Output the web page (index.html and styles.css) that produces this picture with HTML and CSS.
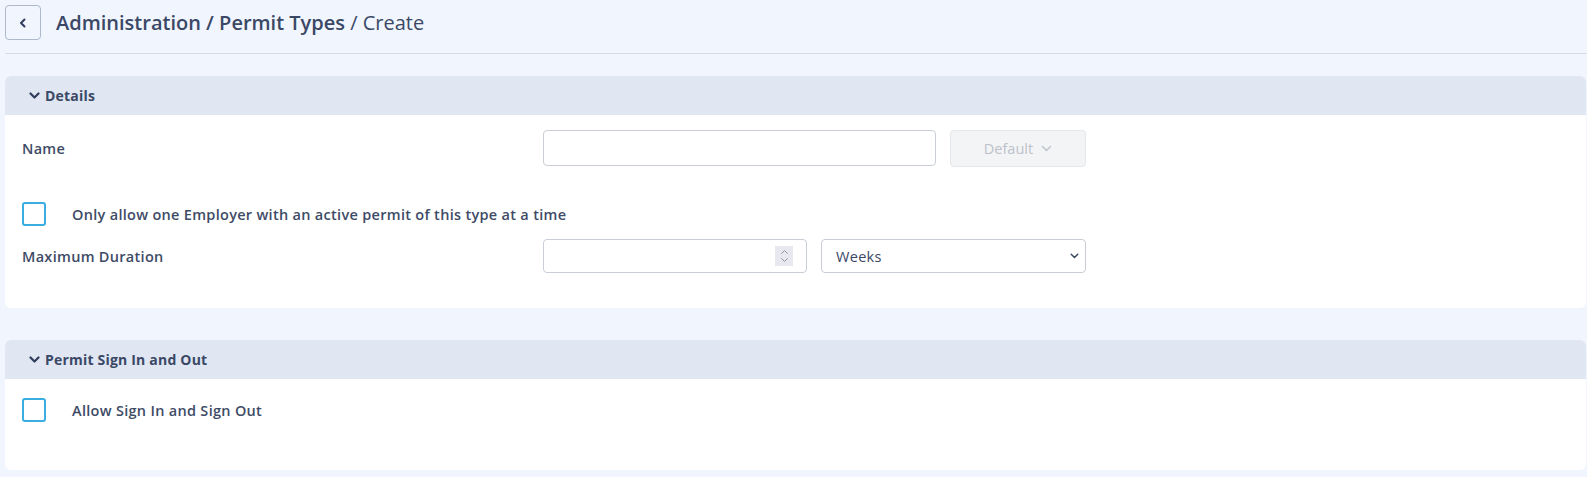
FILE: index.html
```html
<!DOCTYPE html>
<html lang="en">
<head>
    <meta charset="UTF-8">
    <meta name="viewport" content="width=device-width, initial-scale=1.0">
    <title>Create Permit Type</title>
    <link rel="stylesheet" href="styles.css">
</head>
<body>
    <div class="topbar">
        <button type="button" class="back-btn">
            <svg width="12" height="12" viewBox="0 0 12 12"><path d="M7.5 2.5 L4 6 L7.5 9.5" fill="none" stroke="#2f3d5c" stroke-width="2" stroke-linecap="round" stroke-linejoin="round"/></svg>
        </button>
        <h1 class="page-title">Administration / Permit Types <span class="current">/ Create</span></h1>
    </div>
    <div class="divider"></div>

    <section class="panel">
        <div class="panel-header">
            <svg class="caret" width="11" height="8" viewBox="0 0 11 8"><path d="M1.5 1.5 L5.5 5.5 L9.5 1.5" fill="none" stroke="#2f3d5c" stroke-width="2.2" stroke-linecap="round" stroke-linejoin="round"/></svg>
            Details
        </div>
        <div class="panel-body details-body">
            <div class="form-row">
                <label class="field-label">Name</label>
                <div class="controls">
                    <input type="text" class="text-input name-input">
                    <button type="button" class="default-btn" disabled>
                        Default
                        <svg width="11" height="7" viewBox="0 0 11 7"><path d="M1.5 1.5 L5.5 5.5 L9.5 1.5" fill="none" stroke="#bfc4cd" stroke-width="1.5" stroke-linecap="round" stroke-linejoin="round"/></svg>
                    </button>
                </div>
            </div>

            <div class="check-row">
                <span class="checkbox"></span>
                <span class="check-label">Only allow one Employer with an active permit of this type at a time</span>
            </div>

            <div class="form-row duration-row">
                <label class="field-label">Maximum Duration</label>
                <div class="controls">
                    <div class="number-input">
                        <span class="spinner">
                            <svg width="9" height="16" viewBox="0 0 9 16"><path d="M1.5 5.5 L4.5 2.5 L7.5 5.5 M1.5 10.5 L4.5 13.5 L7.5 10.5" fill="none" stroke="#8e96a4" stroke-width="1" stroke-linecap="round"/></svg>
                        </span>
                    </div>
                    <div class="select-box">
                        <span>Weeks</span>
                        <svg width="9" height="6" viewBox="0 0 9 6"><path d="M1.2 1.2 L4.5 4.5 L7.8 1.2" fill="none" stroke="#3e4b66" stroke-width="1.5" stroke-linecap="round"/></svg>
                    </div>
                </div>
            </div>
        </div>
    </section>

    <section class="panel last-panel">
        <div class="panel-header">
            <svg class="caret" width="11" height="8" viewBox="0 0 11 8"><path d="M1.5 1.5 L5.5 5.5 L9.5 1.5" fill="none" stroke="#2f3d5c" stroke-width="2.2" stroke-linecap="round" stroke-linejoin="round"/></svg>
            Permit Sign In and Out
        </div>
        <div class="panel-body sign-body">
            <div class="check-row">
                <span class="checkbox"></span>
                <span class="check-label">Allow Sign In and Sign Out</span>
            </div>
        </div>
    </section>
</body>
</html>
```

FILE: styles.css
```css
body {
    font-family: "Open Sans", "Noto Sans", sans-serif;
    background-color: #f1f5fd;
    color: #3e4b66;
    margin: 0;
    overflow: hidden;
}
.topbar {
    display: flex;
    align-items: center;
    gap: 15px;
    padding: 5px 5px 0 5px;
}
.back-btn {
    width: 36px;
    height: 35px;
    border: 1px solid #aeb8cb;
    border-radius: 4px;
    background: transparent;
    display: flex;
    align-items: center;
    justify-content: center;
    padding: 0;
}
.page-title {
    margin: 0;
    font-size: 20px;
    line-height: 24px;
    font-weight: 600;
    color: #3a4866;
}
.page-title .current {
    font-weight: 400;
}
.divider {
    height: 1px;
    background-color: #d9dce2;
    margin: 13px 0 22px 5px;
}
.panel {
    background-color: #fff;
    border-radius: 6px;
    margin: 0 1px 32px 5px;
}
.last-panel {
    margin-bottom: 0;
}
.panel-header {
    height: 39px;
    display: flex;
    align-items: center;
    gap: 5px;
    padding-left: 24px;
    background-color: #e0e6f2;
    border-radius: 6px 6px 0 0;
    font-size: 14px;
    font-weight: 700;
    letter-spacing: 0.2px;
    color: #3a4866;
}
.panel-body {
    padding: 15px 17px 35px 17px;
}
.sign-body {
    padding: 19px 17px 48px 17px;
}
.form-row {
    display: flex;
    align-items: center;
}
.field-label {
    width: 521px;
    flex-shrink: 0;
    font-size: 14.5px;
    font-weight: 600;
    letter-spacing: 0.3px;
}
.controls {
    display: flex;
    gap: 14px;
}
.text-input {
    width: 393px;
    height: 36px;
    box-sizing: border-box;
    border: 1px solid #c9ced6;
    border-radius: 4px;
}
.default-btn {
    width: 136px;
    height: 37px;
    background-color: #f3f4f6;
    border: 1px solid #e4e7eb;
    border-radius: 4px;
    color: #bcc1ca;
    font-family: inherit;
    font-size: 14.5px;
    display: flex;
    align-items: center;
    justify-content: center;
    gap: 8px;
}
.check-row {
    display: flex;
    align-items: center;
    gap: 26px;
    margin-top: 35px;
}
.sign-body .check-row {
    margin-top: 0;
}
.checkbox {
    width: 24px;
    height: 24px;
    box-sizing: border-box;
    border: 2px solid #3aaee0;
    border-radius: 3px;
}
.check-label {
    font-size: 14.5px;
    font-weight: 600;
    letter-spacing: 0.3px;
}
.duration-row {
    margin-top: 13px;
}
.number-input {
    width: 264px;
    height: 34px;
    box-sizing: border-box;
    border: 1px solid #c9ced6;
    border-radius: 4px;
    display: flex;
    align-items: center;
    justify-content: flex-end;
    padding-right: 13px;
}
.spinner {
    width: 18px;
    height: 20px;
    background-color: #e8e9ee;
    display: flex;
    align-items: center;
    justify-content: center;
}
.select-box {
    width: 265px;
    height: 34px;
    box-sizing: border-box;
    border: 1px solid #c9ced6;
    border-radius: 4px;
    display: flex;
    align-items: center;
    justify-content: space-between;
    padding: 0 6px 0 14px;
    font-size: 14.5px;
    font-weight: 500;
    letter-spacing: 0.3px;
    color: #3a4866;
}
```
